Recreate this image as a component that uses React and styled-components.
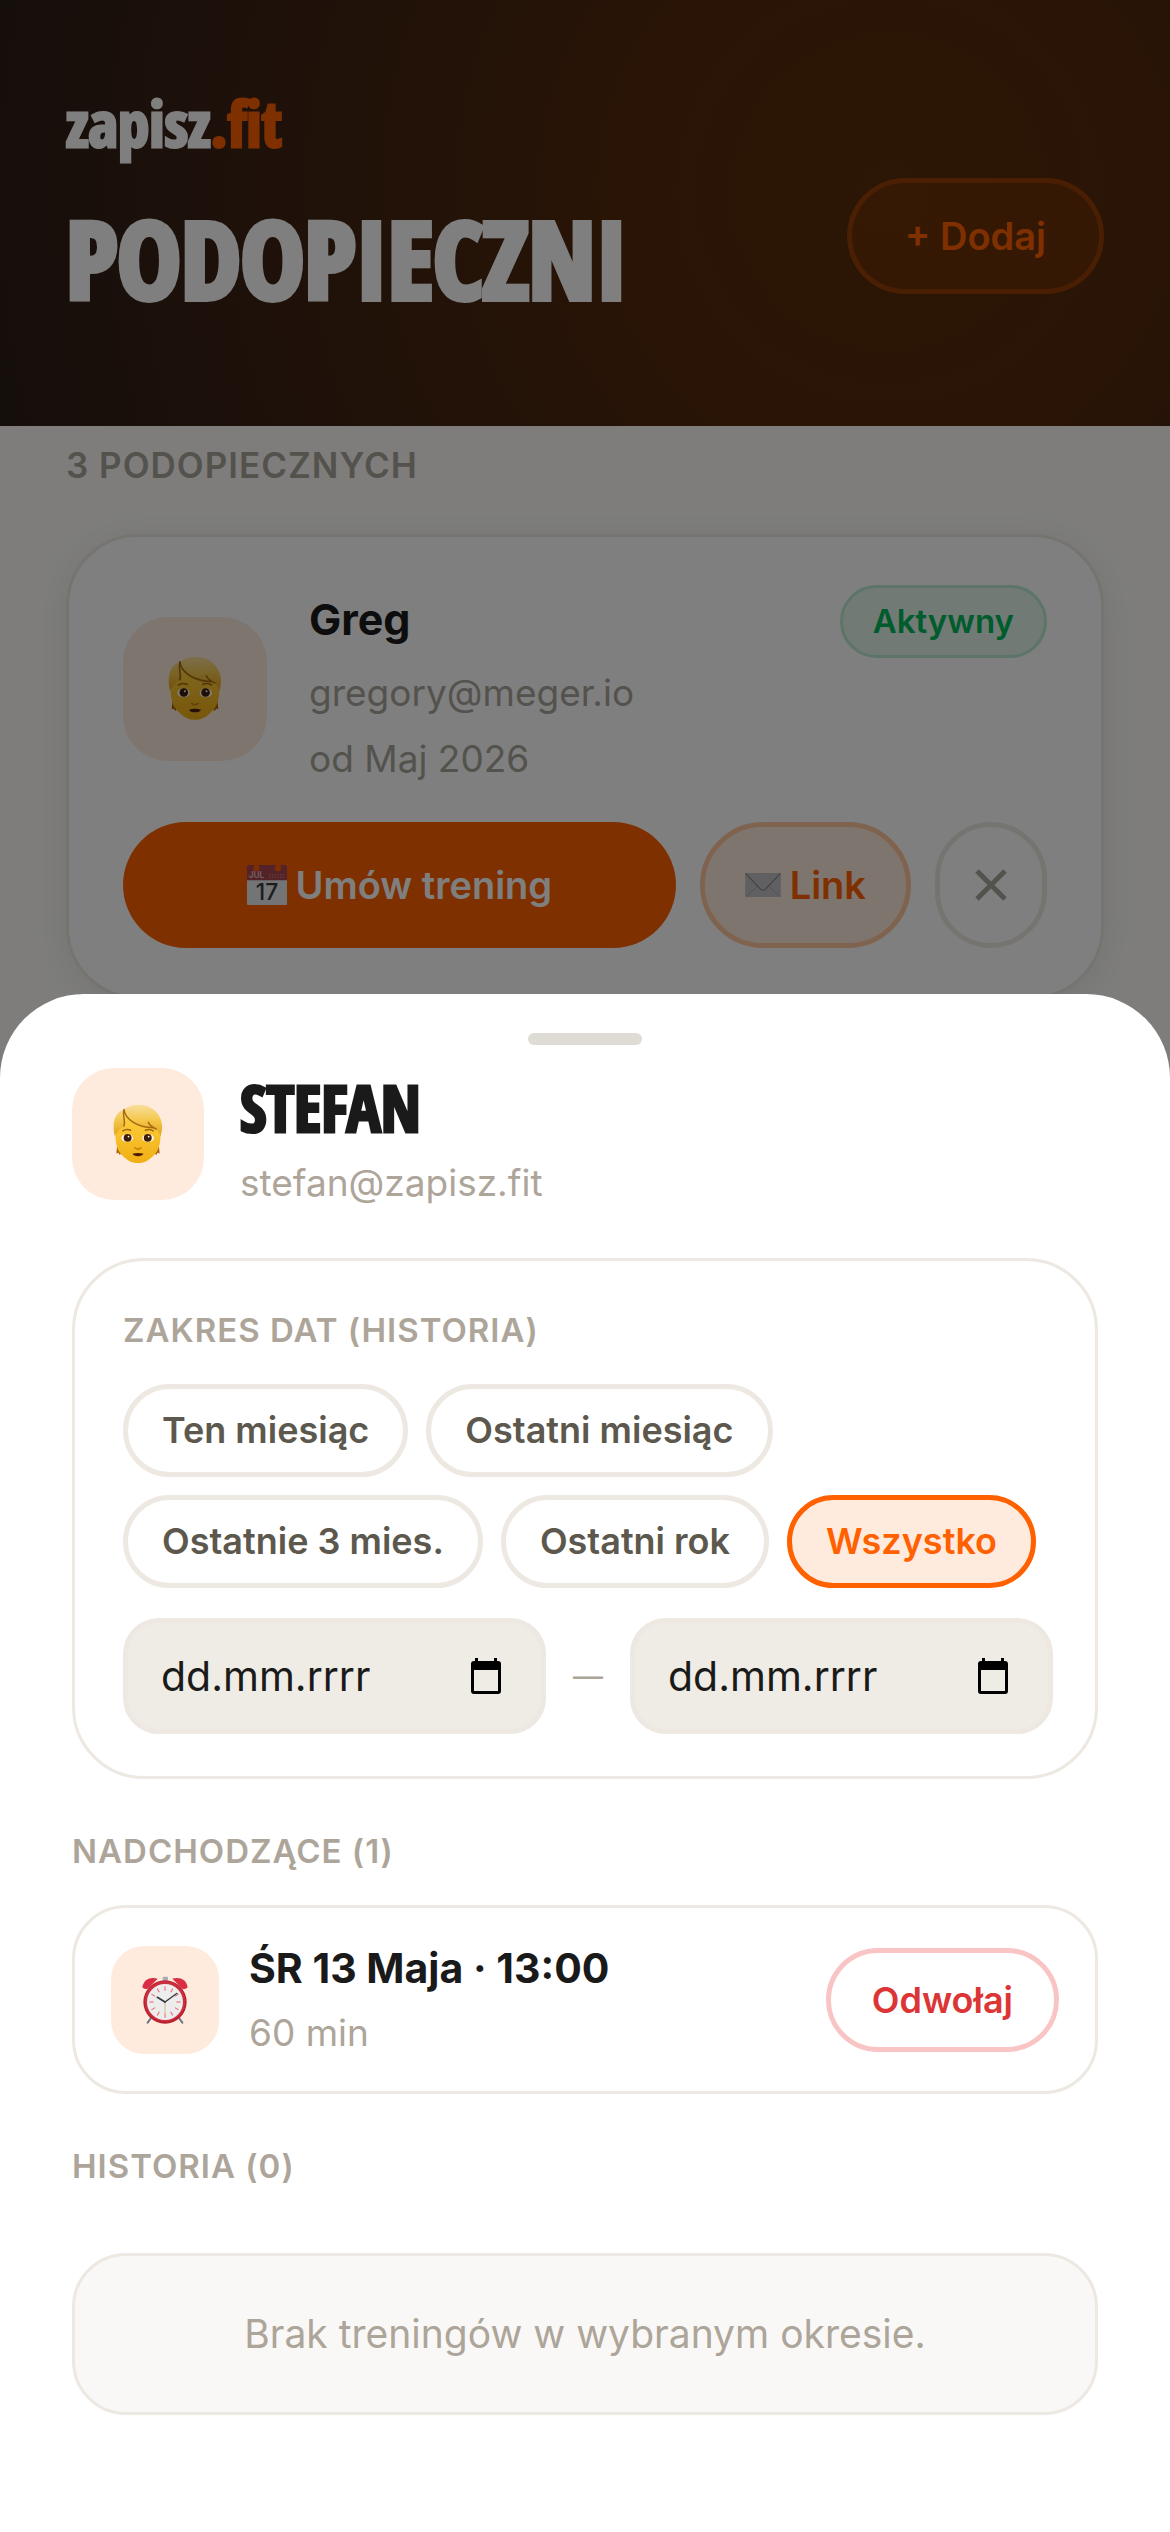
import React, {useState} from 'react'
import styled, {createGlobalStyle} from 'styled-components'

const RANGES = ['Ten miesiąc', 'Ostatni miesiąc', 'Ostatnie 3 mies.', 'Ostatni rok', 'Wszystko']

const PersonIcon = ({width}) => (
    <svg width={width} viewBox='0 0 164 196' aria-hidden='true'>
        <defs>
            <linearGradient id='hair' x1='0' y1='0' x2='0' y2='1'>
                <stop offset='0' stopColor='#F8DF9C'/>
                <stop offset='0.5' stopColor='#F4C64A'/>
                <stop offset='1' stopColor='#E3A21A'/>
            </linearGradient>
            <linearGradient id='skin' x1='0' y1='0' x2='0' y2='1'>
                <stop offset='0' stopColor='#FFD243'/>
                <stop offset='1' stopColor='#F0AE14'/>
            </linearGradient>
        </defs>
        <path d='M14 132 L11 162 L18 160 L22 167 L30 160 L28 132 Z' fill='#A8630B'/>
        <path d='M150 132 L153 162 L146 160 L142 167 L134 160 L136 132 Z' fill='#A8630B'/>
        <path d='M8 98 C8 124 12 142 20 156 C28 168 36 174 46 182 C58 191 70 194 82 194 C94 194 106 191 118 182 C128 174 136 168 144 156 C152 142 156 124 156 98 C154 50 126 22 82 22 C38 22 10 50 8 98 Z' fill='url(#skin)'/>
        <path d='M6 106 C-4 66 4 28 36 18 C66 -6 122 -4 148 34 C166 62 162 84 156 106 C152 92 144 84 130 78 C98 80 64 66 42 42 C46 56 42 64 38 72 C28 78 12 92 6 106 Z' fill='url(#hair)'/>
        <path d='M36 18 C40 52 82 76 130 78 M36 18 C30 40 42 56 36 72 M116 60 C120 68 128 76 142 82' fill='none' stroke='#A86A10' strokeWidth='5' strokeLinecap='round'/>
        <path d='M32 88 Q44 80 58 86 M106 86 Q120 80 132 88' fill='none' stroke='#A0650F' strokeWidth='5' strokeLinecap='round'/>
        <ellipse cx='47' cy='112' rx='19' ry='13' fill='#FFF8E8'/>
        <ellipse cx='115' cy='112' rx='19' ry='13' fill='#FFF8E8'/>
        <circle cx='48' cy='111' r='13' fill='#3E1D0C'/>
        <circle cx='114' cy='111' r='13' fill='#3E1D0C'/>
        <circle cx='51' cy='107' r='3' fill='#FFF'/>
        <circle cx='117' cy='107' r='3' fill='#FFF'/>
        <path d='M72 144 Q82 152 92 144' fill='none' stroke='#C9820A' strokeWidth='5' strokeLinecap='round'/>
        <path d='M64 163 Q82 158 100 163 Q96 171 82 171 Q68 171 64 163 Z' fill='#4A1C06'/>
    </svg>
)

const AlarmIcon = () => (
    <svg width='48' height='48' viewBox='0 0 140 144' aria-hidden='true'>
        <path d='M28 126 L18 140 M112 126 L122 140' stroke='#70767E' strokeWidth='6' strokeLinecap='round'/>
        <rect x='63' y='2' width='16' height='14' rx='3' fill='#A9ADB3'/>
        <path d='M2 34 C6 10 26 2 48 8 L18 38 Q8 42 2 34 Z' fill='#DA2C43'/>
        <path d='M138 34 C134 10 114 2 92 8 L122 38 Q132 42 138 34 Z' fill='#DA2C43'/>
        <circle cx='70' cy='78' r='65' fill='#B9202F'/>
        <circle cx='70' cy='76' r='61' fill='#CB2E3C'/>
        <circle cx='70' cy='78' r='54' fill='#EDEDEE'/>
        <g stroke='#F0606A' strokeWidth='3'>
            {[0, 30, 60, 90, 120, 150, 180, 210, 240, 270, 300, 330].map((a) => (
                <path key={a} d='M70 31 V44' transform={`rotate(${a} 70 78)`}/>
            ))}
        </g>
        <path d='M70 78 V124' stroke='#D7B78A' strokeWidth='3'/>
        <path d='M70 78 L47 64' stroke='#33373B' strokeWidth='5' strokeLinecap='round'/>
        <path d='M70 78 L106 52' stroke='#33373B' strokeWidth='4' strokeLinecap='round'/>
    </svg>
)

const CalendarEmoji = () => (
    <svg width='40' height='40' viewBox='0 0 116 116' aria-hidden='true'>
        <rect width='116' height='116' rx='3' fill='#E6E8EC'/>
        <path d='M0 3 Q0 0 3 0 H113 Q116 0 116 3 V44 H0 Z' fill='#A94750'/>
        <circle cx='27' cy='9' r='9' fill='#FF6000'/>
        <circle cx='90' cy='9' r='9' fill='#FF6000'/>
        <text x='5' y='39' fontFamily='Inter, sans-serif' fontSize='24' fontWeight='700' fill='#DDB9BE'>JUL</text>
        <path d='M64 28 H110 M64 35 H110' stroke='#C8777E' strokeWidth='4' strokeDasharray='4 4'/>
        <text x='58' y='102' textAnchor='middle' fontFamily='Inter, sans-serif' fontSize='66' fontWeight='500' fill='#3A3A3C'>17</text>
    </svg>
)

const EnvelopeEmoji = () => (
    <svg width='36' height='24' viewBox='0 0 104 70' aria-hidden='true'>
        <rect width='104' height='70' rx='3' fill='#C0C1C4'/>
        <path d='M2 69 L38 36 M102 69 L66 36' stroke='#93959A' strokeWidth='2'/>
        <path d='M1 1 L42 44 Q52 56 62 44 L103 1' fill='none' stroke='#7E8085' strokeWidth='3'/>
    </svg>
)

const PickerIcon = () => (
    <svg width='32' height='36' viewBox='0 0 32 36' aria-hidden='true'>
        <path d='M5 0 H8 V3 H24 V0 H27 V3 H28 Q31 3 31 6 V33 Q31 36 28 36 H4 Q1 36 1 33 V6 Q1 3 4 3 H5 Z M4 12 V33 H28 V12 Z' fill='#000' fillRule='evenodd'/>
    </svg>
)

const App = () => {
    const [range, setRange] = useState('Wszystko')

    return (
        <Screen>
            <GlobalStyle/>
            <Header>
                <div>
                    <Logo>zapisz<span>.fit</span></Logo>
                    <PageTitle>PODOPIECZNI</PageTitle>
                </div>
                <AddButton>+ Dodaj</AddButton>
            </Header>
            <List>
                <ListLabel>3 PODOPIECZNYCH</ListLabel>
                <ClientCard>
                    <ClientHead>
                        <Avatar size={144} radius={45}><PersonIcon width={54}/></Avatar>
                        <ClientInfo>
                            <ClientName>Greg</ClientName>
                            <ClientMeta>gregory@meger.io</ClientMeta>
                            <ClientMeta>od Maj 2026</ClientMeta>
                        </ClientInfo>
                        <Badge>Aktywny</Badge>
                    </ClientHead>
                    <Actions>
                        <PrimaryButton><CalendarEmoji/>Umów trening</PrimaryButton>
                        <LinkButton><EnvelopeEmoji/>Link</LinkButton>
                        <CloseButton aria-label='Usuń'>
                            <svg width='32' height='32' viewBox='0 0 32 32' aria-hidden='true'>
                                <path d='M2 2 L30 30 M30 2 L2 30' stroke='currentColor' strokeWidth='5'/>
                            </svg>
                        </CloseButton>
                    </Actions>
                </ClientCard>
            </List>

            <Backdrop>
                <Sheet role='dialog' aria-label='Stefan'>
                    <Handle/>
                    <SheetHead>
                        <Avatar size={132} radius={42}><PersonIcon width={50}/></Avatar>
                        <div>
                            <SheetTitle>STEFAN</SheetTitle>
                            <SheetEmail>stefan@zapisz.fit</SheetEmail>
                        </div>
                    </SheetHead>

                    <RangeCard>
                        <SectionLabel>ZAKRES DAT (HISTORIA)</SectionLabel>
                        <Chips>
                            {RANGES.map((name) => (
                                <Chip key={name} $active={name === range} onClick={() => setRange(name)}>{name}</Chip>
                            ))}
                        </Chips>
                        <Dates>
                            <DateField>
                                <DateInput type='text' aria-label='Data od' placeholder='dd.mm.rrrr'/>
                                <PickerIcon/>
                            </DateField>
                            <Dash>—</Dash>
                            <DateField>
                                <DateInput type='text' aria-label='Data do' placeholder='dd.mm.rrrr'/>
                                <PickerIcon/>
                            </DateField>
                        </Dates>
                    </RangeCard>

                    <Section>
                        <SectionLabel>NADCHODZĄCE (1)</SectionLabel>
                        <Training>
                            <Avatar size={108} radius={33}><AlarmIcon/></Avatar>
                            <TrainingInfo>
                                <TrainingDate>ŚR 13 Maja · 13:00</TrainingDate>
                                <TrainingTime>60 min</TrainingTime>
                            </TrainingInfo>
                            <CancelButton>Odwołaj</CancelButton>
                        </Training>
                    </Section>

                    <HistorySection>
                        <SectionLabel>HISTORIA (0)</SectionLabel>
                        <Empty>Brak treningów w wybranym okresie.</Empty>
                    </HistorySection>
                </Sheet>
            </Backdrop>
        </Screen>
    )
}

export default App


const GlobalStyle = createGlobalStyle`
    * {
        box-sizing: border-box;
    }

    body {
        margin: 0;
        font-family: Inter, 'Liberation Sans', sans-serif;
        font-size: 36px;
        color: #1A1A1A;
        background: #FCFBF7;
    }

    h1, h2, h3, p {
        margin: 0;
    }

    button, input {
        font-family: inherit;
        margin: 0;
    }

    svg {
        flex-shrink: 0;
    }
`

const Screen = styled.div`
    min-height: 100vh;
`

const Header = styled.header`
    display: flex;
    align-items: center;
    justify-content: space-between;
    padding: 81px 66px 108px;
    background: radial-gradient(circle at 76% 45%, #582C0A 0%, #54290C 28%, #462510 50%, #3A2115 75%, #2A1D16 100%);
`

const Logo = styled.div`
    font-family: 'Open Sans Condensed', 'Roboto Condensed', sans-serif;
    font-size: 63px;
    font-weight: 700;
    line-height: 84px;
    color: #FFF;
    -webkit-text-stroke: 3px currentColor;

    span {
        color: #FF6000;
    }
`

const PageTitle = styled.h1`
    font-family: 'Open Sans Condensed', 'Roboto Condensed', sans-serif;
    font-size: 107px;
    font-weight: 700;
    line-height: 120px;
    margin-top: 33px;
    color: #FFF;
    -webkit-text-stroke: 6px currentColor;
`

const BaseButton = styled.button`
    display: flex;
    align-items: center;
    justify-content: center;
    gap: 9px;
    border: 5px solid transparent;
    border-radius: 63px;
    background: none;
    font-size: 38px;
    font-weight: 600;
    line-height: 48px;
    white-space: nowrap;
    cursor: pointer;
`

const AddButton = styled(BaseButton)`
    padding: 29px 53px;
    margin-top: 72px;
    color: #FF6000;
    background: rgba(255, 96, 0, 0.12);
    border-color: rgba(255, 96, 0, 0.28);
`

const List = styled.main`
    padding: 18px 66px 0;
`

const ListLabel = styled.h2`
    font-size: 35px;
    font-weight: 600;
    line-height: 42px;
    letter-spacing: 1px;
    color: #A8A59A;
    margin-bottom: 48px;
`

const ClientCard = styled.section`
    padding: 48px 54px;
    border: 3px solid #ECE9E2;
    border-radius: 72px;
    background: #FFF;
    box-shadow: 0 6px 36px rgba(0, 0, 0, 0.08);
`

const ClientHead = styled.div`
    display: flex;
    align-items: center;
`

const Avatar = styled.div`
    display: flex;
    align-items: center;
    justify-content: center;
    flex-shrink: 0;
    width: ${(props) => props.size}px;
    height: ${(props) => props.size}px;
    border-radius: ${(props) => props.radius}px;
    background: #FFEBDE;
`

const ClientInfo = styled.div`
    flex: 1;
    padding-left: 42px;
`

const ClientName = styled.h3`
    font-size: 43px;
    font-weight: 700;
    line-height: 69px;
    margin-bottom: 6px;
`

const ClientMeta = styled.p`
    font-size: 37px;
    line-height: 66px;
    color: #A8A59A;
`

const Badge = styled.span`
    align-self: flex-start;
    padding: 12px 30px;
    border: 3px solid #B8EAD0;
    border-radius: 37px;
    background: #E2F4EA;
    color: #00B85A;
    font-size: 33px;
    font-weight: 600;
    line-height: 43px;
`

const Actions = styled.div`
    display: flex;
    gap: 24px;
    margin-top: 30px;
`

const PrimaryButton = styled(BaseButton)`
    flex: 1;
    padding: 34px 24px;
    background: #FF6000;
    color: #FFF;
`

const LinkButton = styled(BaseButton)`
    padding: 34px 40px;
    background: #FFEBDE;
    border-color: #FFC79F;
    color: #FF6000;
`

const CloseButton = styled(BaseButton)`
    width: 112px;
    color: #A8A59A;
    border-color: #ECE9E2;
`

const Backdrop = styled.div`
    position: fixed;
    inset: 0;
    display: flex;
    flex-direction: column;
    justify-content: flex-end;
    background: rgba(0, 0, 0, 0.5);
`

const Sheet = styled.div`
    padding: 39px 72px 117px;
    border-radius: 84px 84px 0 0;
    background: #FFF;
`

const Handle = styled.div`
    width: 114px;
    height: 12px;
    margin: 0 auto 21px;
    border-radius: 6px;
    background: #DFDCD5;
`

const SheetHead = styled.div`
    display: flex;
    align-items: center;
    gap: 36px;
`

const SheetTitle = styled.h2`
    font-family: 'Open Sans Condensed', 'Roboto Condensed', sans-serif;
    font-size: 64px;
    font-weight: 700;
    line-height: 84px;
    -webkit-text-stroke: 3px currentColor;
`

const SheetEmail = styled.p`
    font-size: 37px;
    line-height: 36px;
    margin-top: 15px;
    color: #ADA59A;
`

const RangeCard = styled.section`
    margin-top: 57px;
    padding: 48px 42px 42px 48px;
    border: 3px solid #EDE8E1;
    border-radius: 72px;
`

const SectionLabel = styled.h3`
    font-size: 33px;
    font-weight: 600;
    line-height: 42px;
    letter-spacing: 1px;
    color: #ADA59A;
`

const Chips = styled.div`
    display: flex;
    flex-wrap: wrap;
    gap: 18px;
    margin-top: 33px;
`

const Chip = styled.button`
    padding: 20px 34px;
    border: 5px solid ${(props) => (props.$active ? '#FF6000' : '#EDE8E1')};
    border-radius: 47px;
    background: ${(props) => (props.$active ? '#FFEBDE' : '#FFF')};
    color: ${(props) => (props.$active ? '#FF6000' : '#5C584D')};
    font-size: 36px;
    font-weight: 600;
    line-height: 43px;
    white-space: nowrap;
    cursor: pointer;
`

const Dates = styled.div`
    display: flex;
    align-items: center;
    gap: 24px;
    margin-top: 30px;
`

const DateField = styled.label`
    display: flex;
    align-items: center;
    flex: 1;
    min-width: 0;
    height: 116px;
    padding: 0 39px 0 33px;
    border: 5px solid #EDE8E1;
    border-radius: 36px;
    background: #EFECE5;
`

const DateInput = styled.input`
    flex: 1;
    min-width: 0;
    padding: 0;
    border: 0;
    outline: 0;
    background: none;
    font-size: 41px;
    color: #1A1A1A;

    &::placeholder {
        color: #1A1A1A;
        opacity: 1;
    }
`

const Dash = styled.span`
    width: 36px;
    text-align: center;
    font-size: 30px;
    color: #ADA59A;
`

const Section = styled.section`
    margin-top: 51px;
`

const HistorySection = styled(Section)`
    display: flex;
    flex-direction: column;
    gap: 66px;
`

const Training = styled.div`
    display: flex;
    align-items: center;
    margin-top: 33px;
    padding: 30px 36px;
    border: 3px solid #EDE8E1;
    border-radius: 54px;
`

const TrainingInfo = styled.div`
    flex: 1;
    padding-left: 30px;
`

const TrainingDate = styled.p`
    font-size: 41px;
    font-weight: 700;
    line-height: 60px;
`

const TrainingTime = styled.p`
    font-size: 37px;
    line-height: 57px;
    margin-top: 6px;
    color: #ADA59A;
`

const CancelButton = styled(BaseButton)`
    padding: 23px 41px;
    font-size: 36px;
    color: #DC3535;
    border-color: #F8C4C4;
`

const Empty = styled.div`
    padding: 54px 36px;
    border: 3px solid #EDE8E1;
    border-radius: 54px;
    background: #F9F8F6;
    text-align: center;
    font-size: 39px;
    line-height: 48px;
    color: #ADA59A;
`
